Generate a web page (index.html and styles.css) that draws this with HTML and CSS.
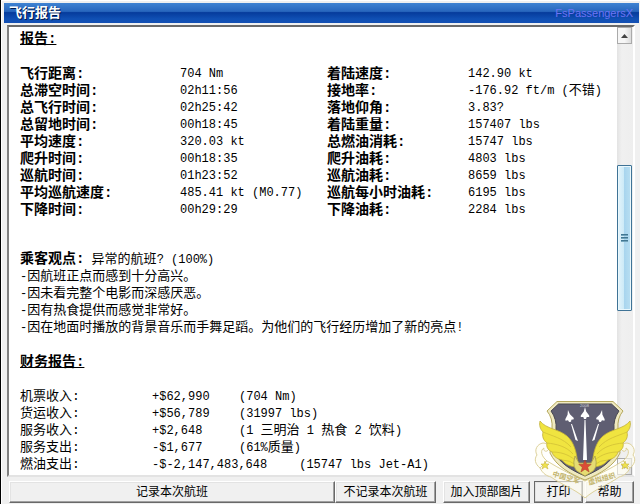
FILE: index.html
```html
<!DOCTYPE html>
<html lang="zh-CN">
<head>
<meta charset="utf-8">
<title>飞行报告</title>
<link rel="stylesheet" href="styles.css">
</head>
<body>
<main class="window">
  <header class="titlebar">
    <h1 class="title">飞行报告</h1>
    <span class="brand">FsPassengersX</span>
  </header>

  <section class="viewer">
    <div class="report">
      <h2 class="heading">报告:</h2>
      <table class="grid stats">
        <colgroup><col class="c-label"><col class="c-value"><col class="c-label2"><col></colgroup>
        <tr><th>飞行距离:</th><td>704 Nm</td><th>着陆速度:</th><td>142.90 kt</td></tr>
        <tr><th>总滞空时间:</th><td>02h11:56</td><th>接地率:</th><td>-176.92 ft/m (<span class="cjk">不错</span>)</td></tr>
        <tr><th>总飞行时间:</th><td>02h25:42</td><th>落地仰角:</th><td>3.83?</td></tr>
        <tr><th>总留地时间:</th><td>00h18:45</td><th>着陆重量:</th><td>157407 lbs</td></tr>
        <tr><th>平均速度:</th><td>320.03 kt</td><th>总燃油消耗:</th><td>15747 lbs</td></tr>
        <tr><th>爬升时间:</th><td>00h18:35</td><th>爬升油耗:</th><td>4803 lbs</td></tr>
        <tr><th>巡航时间:</th><td>01h23:52</td><th>巡航油耗:</th><td>8659 lbs</td></tr>
        <tr><th>平均巡航速度:</th><td>485.41 kt (M0.77)</td><th>巡航每小时油耗:</th><td>6195 lbs</td></tr>
        <tr><th>下降时间:</th><td>00h29:29</td><th>下降油耗:</th><td>2284 lbs</td></tr>
      </table>

      <div class="opinions">
        <p><strong>乘客观点:</strong> <span class="cjk">异常的航班</span>? (100%)</p>
        <p>-<span class="cjk">因航班正点而感到十分高兴。</span></p>
        <p>-<span class="cjk">因未看完整个电影而深感厌恶。</span></p>
        <p>-<span class="cjk">因有热食提供而感觉非常好。</span></p>
        <p>-<span class="cjk">因在地面时播放的背景音乐而手舞足蹈。为他们的飞行经历增加了新的亮点</span>!</p>
      </div>

      <h2 class="heading">财务报告:</h2>
      <table class="grid finance">
        <colgroup><col class="c-item"><col class="c-amount"><col></colgroup>
        <tr><td class="cjk">机票收入:</td><td>+$62,990</td><td>(704 Nm)</td></tr>
        <tr><td class="cjk">货运收入:</td><td>+$56,789</td><td>(31997 lbs)</td></tr>
        <tr><td class="cjk">服务收入:</td><td>+$2,648</td><td>(1 <span class="cjk">三明治</span> 1 <span class="cjk">热食</span> 2 <span class="cjk">饮料</span>)</td></tr>
        <tr><td class="cjk">服务支出:</td><td>-$1,677</td><td>(61%<span class="cjk">质量</span>)</td></tr>
        <tr><td class="cjk">燃油支出:</td><td colspan="2">-$-2,147,483,648<span class="note">(15747 lbs Jet-A1)</span></td></tr>
      </table>
    </div>

    <div class="scrollbar">
      <button class="arrow" aria-label="向上滚动"><svg width="7" height="4" viewBox="0 0 7 4"><path d="M3.500 0L7 4H0z" fill="#444"/></svg></button>
      <span></span>
      <div class="thumb"><i></i><i></i><i></i></div>
      <span></span>
      <button class="arrow" aria-label="向下滚动"><svg width="7" height="4" viewBox="0 0 7 4"><path d="M3.500 4L0 0h7z" fill="#444"/></svg></button>
    </div>
  </section>

  <footer class="actions">
    <button class="btn wide">记录本次航班</button>
    <button class="btn skip">不记录本次航班</button>
    <button class="btn picture">加入顶部图片</button>
    <button class="btn print">打印</button>
    <button class="btn help">帮助</button>
  </footer>

  <svg class="emblem" viewBox="534 400 102 100" role="img" aria-label="徽章">
    <g fill="#fffdf0" fill-opacity=".6" stroke="#ddd19a">
      <path d="M547 461C560 469 574 476 585 481C596 476 610 469 623 461L630 468C627 474 623 476 619 477C608 485 595 489 585 498C575 489 562 485 551 477C547 476 543 474 540 468Z"/>
      <path d="M540 468C535 464 534 459 537 455C534 450 537 444 543 443C549 443 551 449 547 451C545 452 543 450 544 448C540 450 541 456 547 461Z"/>
      <path d="M630 468C635 464 636 459 633 455C636 450 633 444 627 443C621 443 619 449 623 451C625 452 627 450 626 448C630 450 629 456 623 461Z"/>
    </g>
    <path d="M557 401.500H613L623 411Q617 418 618 429L620 453C614 466 600 474 585 480C570 474 556 466 550 453L552 429Q553 418 547 411Z" fill="#efe9c0" stroke="#b5a85c"/>
    <path d="M558.500 404H611.500L619 411Q613 419 614 430L616 451C611 463 599 470 585 476C571 470 559 463 554 451L556 430Q557 419 551 411Z" fill="#5f5e72" stroke="#494852"/>
    <g fill="#fff">
      <path id="jet" d="M585 407l1.200 4.500 3 4v1.500h-2.500l-.7 2h-2l-.7-2h-2.500v-1.500l3-4z"/>
      <use href="#jet" transform="translate(-16 3) rotate(-10 585 413)"/>
      <use href="#jet" transform="translate(16 3) rotate(10 585 413)"/>
      <path d="M571 424h1l6 17-2.500-1zM599 424h-1l-6 17 2.500-1zM584.500 420h1l1.500 40h-4z"/>
    </g>
    <g fill="#f0e440" stroke="#c1af38" stroke-width=".8">
      <path id="wing" d="M540 421C546 429 559 429 567 436C574 442 577 452 578 467C570 467 565 464 562 460C557 459 553 456 552 452C548 450 546 447 547 443C543 440 542 436 543 432C540 429 539 425 540 421Z"/>
      <use href="#wing" transform="matrix(-1 0 0 1 1170 0)"/>
    </g>
    <g fill="none" stroke="#d2c036" stroke-width=".8">
      <path id="feathers" d="M543 432C552 436 563 438 571 447M547 443C556 444 566 446 573 454M552 452C560 452 568 454 575 460M562 460Q570 460 576 465"/>
      <use href="#feathers" transform="matrix(-1 0 0 1 1170 0)"/>
    </g>
    <path d="M575 456Q571 469 580 473L585 476L590 473Q599 469 595 456L591 463H579Z" fill="#e6dc72" stroke="#ab9f48" stroke-width=".8"/>
    <path d="M585 460l1.700 4.300h4.600l-3.600 3 1.400 4.700-4.100-2.800-4.100 2.800 1.400-4.700-3.600-3h4.600z" fill="#dc4b35" stroke="#a5402c" stroke-width=".5"/>
    <path d="M545 461l1 3h3l-2 2 1 3-3-2-3 2 1-3-2-2h3zM625 461l1 3h3l-2 2 1 3-3-2-3 2 1-3-2-2h3z" fill="#efe24f" stroke="#c2ae38" stroke-width=".5"/>
    <g class="motto"><text x="552" y="476" transform="rotate(16 552 476)">中国空军</text><text x="589" y="485" transform="rotate(-16 589 485)">虚拟组织</text></g>
    <text class="year" x="580" y="407">2008</text>
  </svg>
</main>
</body>
</html>
```
FILE: styles.css
```css
* { box-sizing: border-box; }

body {
  margin: 0;
  color: #000;
  font: 12px/17px "Liberation Mono", "Noto Sans CJK SC", monospace;
}

.window {
  position: relative;
  display: flex;
  flex-direction: column;
  height: 100vh;
  overflow: hidden;
  padding: 3px 1px 1px 4px;
  background: #f0f0f0;
  border-left: 1px solid #000;
  box-shadow: inset 1px 1px #fff;
}

.titlebar {
  display: flex;
  align-items: center;
  justify-content: space-between;
  flex: none;
  height: 20px;
  margin-left: -1px;
  padding: 0 6px 0 5px;
  background: linear-gradient(#3f83d2, #2866bd 42%, #063b9c 48%, #1050b4 80%, #1450b4);
}

.title {
  margin: 0;
  padding-top: 2px;
  color: #fff;
  font: bold 13px/18px "Liberation Mono", "Noto Sans CJK SC", monospace;
  text-shadow: 1px 1px #001848;
}

.brand {
  color: #6c74f4;
  font: 11px/20px "Liberation Sans", sans-serif;
}

.viewer {
  display: flex;
  flex: 1;
  min-height: 0;
  margin: 2px 4px 4px 2px;
  background: #fff;
  border: 2px solid;
  border-color: #696969 #fff #e3e3e3 #808080;
}

.report {
  flex: 1;
  min-width: 0;
  overflow: hidden;
  padding: 4px 0 0 11px;
  white-space: nowrap;
}

.heading {
  margin: 0 0 17px;
  font-size: 14px;
  font-weight: bold;
  line-height: 17px;
  text-decoration: underline;
}

.grid {
  width: 100%;
  table-layout: fixed;
  border-collapse: collapse;
}

.grid th, .grid td {
  height: 17px;
  padding: 0;
  line-height: 16px;
  text-align: left;
  vertical-align: middle;
}

.grid th, .opinions strong { font-size: 14px; font-weight: bold; }
.opinions strong { line-height: 14px; }
.cjk { font-size: 13px; }
span.cjk { line-height: 13px; }

.c-label { width: 160px; }
.c-value { width: 147px; }
.c-label2 { width: 141px; }
.c-item { width: 132px; }
.c-amount { width: 87px; }
.note { margin-left: 32px; }

.opinions { margin: 34px 0 17px; }
.opinions p { height: 17px; margin: 0; }

.scrollbar {
  display: grid;
  grid-template-rows: 17px 121fr 146fr 147fr 17px;
  flex: none;
  width: 16px;
  background: linear-gradient(90deg, #e3e3e3, #f0f0f0 30%, #eee);
}

.arrow {
  display: grid;
  place-items: center;
  width: 15px;
  padding: 0;
  background: linear-gradient(90deg, #f6f6f6 50%, #dcdcdc);
  border: 1px solid #aaa;
}

.thumb {
  display: flex;
  flex-direction: column;
  align-items: center;
  justify-content: center;
  gap: 1px;
  width: 15px;
  background: linear-gradient(90deg, #e4f4fb, #cdeaf7 45%, #a9d5ee 50%, #b9dff2);
  border: 1px solid #3f7396;
  border-radius: 1px;
  box-shadow: inset 0 0 0 1px #eaf8fd;
}

.thumb i { width: 7px; height: 2px; background: linear-gradient(#28617f, #8dbbd0); }

.actions {
  display: flex;
  flex: none;
  height: 22px;
  margin: 0 5px 0 4px;
}

.btn {
  padding: 2px 0 0;
  color: #000;
  background: #f0f0f0;
  border: 1px solid;
  border-color: #fff #696969 #696969 #fff;
  box-shadow: inset -1px -1px #a0a0a0, inset 1px 1px #e3e3e3;
  font: 12px/18px "Liberation Mono", "Noto Sans CJK SC", monospace;
}

.wide { flex: 1; }
.skip { width: 101px; }
.picture { width: 87px; margin-left: 7px; }
.print { width: 49px; margin: 0 2px 0 4px; border-color: #696969; }
.help { width: 49px; }

.emblem {
  position: absolute;
  right: 4px;
  bottom: 4px;
  width: 102px;
  height: 100px;
  pointer-events: none;
}

.motto { fill: #c2b36a; font: bold 7px "Noto Sans CJK SC", sans-serif; }
.year { fill: #d4d4dc; font: 4px "Liberation Sans", sans-serif; }
```
